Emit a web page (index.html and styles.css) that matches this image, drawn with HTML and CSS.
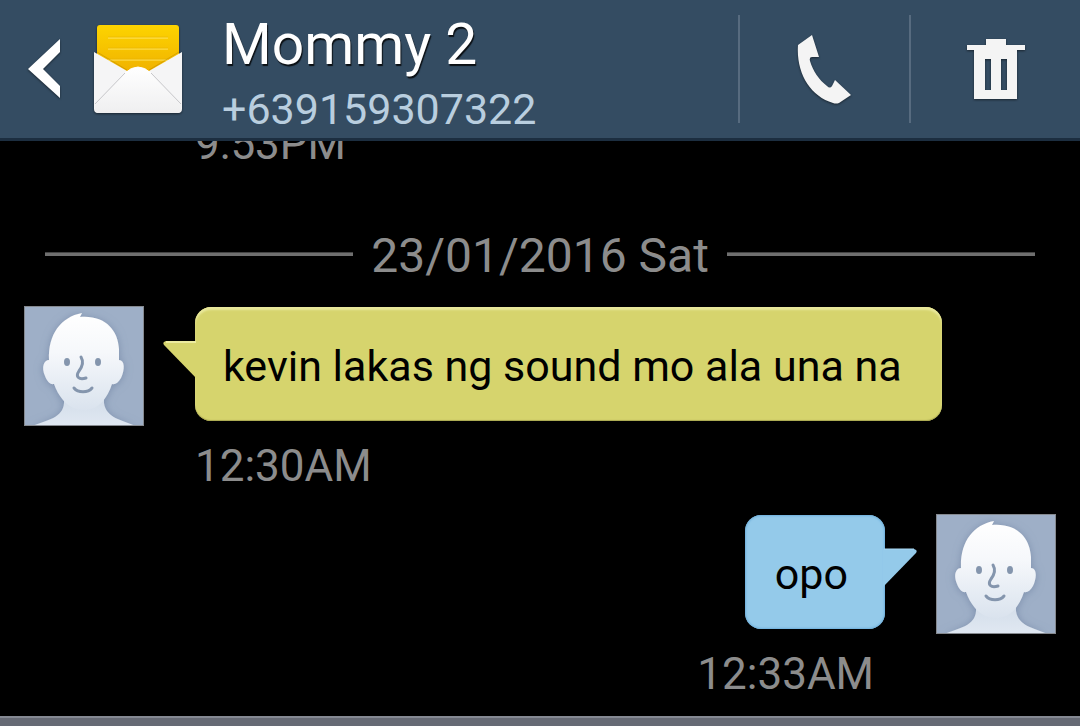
FILE: index.html
```html
<!DOCTYPE html>
<html lang="en">
<head>
    <meta charset="UTF-8">
    <meta name="viewport" content="width=device-width, initial-scale=1.0">
    <title>Mommy 2</title>
    <link rel="stylesheet" href="styles.css">
</head>
<body>
    <!-- shared drawings -->
    <svg class="defs" width="0" height="0" aria-hidden="true">
        <defs>
            <linearGradient id="paper" x1="0" y1="0" x2="0" y2="1">
                <stop offset="0" stop-color="#fdd400" />
                <stop offset="1" stop-color="#eda900" />
            </linearGradient>
            <linearGradient id="flap" x1="0" y1="0" x2="0" y2="1">
                <stop offset="0" stop-color="#ffffff" />
                <stop offset="1" stop-color="#efeff0" />
            </linearGradient>
            <linearGradient id="skin" x1="0" y1="0" x2="0" y2="1">
                <stop offset="0" stop-color="#ffffff" />
                <stop offset="0.4" stop-color="#f6f8fb" />
                <stop offset="1" stop-color="#dae3ee" />
            </linearGradient>
            <linearGradient id="neck" x1="0" y1="0" x2="0" y2="1">
                <stop offset="0" stop-color="#d3dde9" />
                <stop offset="1" stop-color="#e0e8f2" />
            </linearGradient>
            <filter id="glow" x="-20%" y="-20%" width="140%" height="140%">
                <feDropShadow dx="0" dy="1" stdDeviation="4" flood-color="#66799a" flood-opacity="0.6" />
            </filter>
            <symbol id="face" viewBox="0 0 120 120">
                <rect width="120" height="120" fill="#9eafc7" />
                <g filter="url(#glow)">
                    <path d="M8 120 C23 114 39 112 40 97 V90 H80 V97 C82 112 98 114 112 120 Z" fill="url(#neck)" />
                    <path d="M25 54 C24 28 37 11 58 7 L56 11 C81 9 94 24 95 43 V54 C101 54 101 64 97 72 C94 77 91 79 88 78 C86 85 82 91 79 95 C73 102 66 104 60 104 C52 104 45 101 39 94 C35 89 32 84 30 78 C26 79 23 75 21 70 C17 61 20 54 25 54 Z" fill="url(#skin)" />
                </g>
                <ellipse cx="43" cy="56" rx="3" ry="4" fill="#8495ad" />
                <ellipse cx="74" cy="56" rx="3" ry="4" fill="#8495ad" />
                <path d="M57 51 C60 56 58 61 55 65 C51 71 55 74 62 72" fill="none" stroke="#8495ad" stroke-width="3" stroke-linecap="round" />
                <path d="M50 82 C54 87 64 87 68 82" fill="none" stroke="#8495ad" stroke-width="3" stroke-linecap="round" />
                <rect x="0.5" y="0.5" width="119" height="119" fill="none" stroke="#85898f" />
            </symbol>
        </defs>
    </svg>

    <header class="top-bar">
        <button class="back" aria-label="Back">
            <svg width="36" height="64" viewBox="0 0 36 64">
                <path d="M33 2 V15 L16 32 L33 49 V61 L1 32 Z" fill="#ffffff" />
            </svg>
        </button>
        <svg class="mail" width="90" height="90" viewBox="0 0 90 90" aria-hidden="true">
            <path d="M4 4 Q4 1 7 1 H83 Q86 1 86 4 V60 H4 Z" fill="url(#paper)" />
            <path d="M15 14 H75 M15 25 H75 M15 36 H75" stroke="#ffe56a" />
            <path d="M15 13 H75 M15 24 H75 M15 35 H75" stroke="#e4b000" opacity="0.5" />
            <path d="M1 28 L34 47 H56 L89 28 V85 Q89 89 85 89 H5 Q1 89 1 85 Z" fill="#f5f5f6" />
            <path d="M4 28 L34 46 M86 28 L56 46" stroke="#a97b00" opacity="0.4" />
            <path d="M2 81 L32 49 Q45 37 58 49 L88 81 V85 Q88 89 84 89 H6 Q2 89 2 85 Z" fill="url(#flap)" />
            <path d="M2 80 L32 49 M58 49 L88 80" fill="none" stroke="#c7c7ca" />
            <path d="M32 49 Q45 37 58 49" fill="none" stroke="#ffffff" />
        </svg>
        <div class="contact">
            <h1 class="name">Mommy 2</h1>
            <p class="number">+639159307322</p>
        </div>
        <button class="action" aria-label="Call">
            <svg width="60" height="72" viewBox="0 0 60 72">
                <path d="M3 12 L17 2 L24 24 H17 Q14 24 15 28 C18 38 24 47 32 53 Q35 56 37 53 L40 47 L56 62 L44 70 Q41 71 38 70 C15 63 1 40 3 12 Z" fill="#f4f4f4" />
            </svg>
        </button>
        <button class="action" aria-label="Delete">
            <svg width="60" height="62" viewBox="0 0 60 62">
                <path fill-rule="evenodd" d="M20 1 H40 V7 H59 V12 H51 V61 H8 V12 H1 V7 H20 Z M19 21 V52 H25 V21 Z M35 21 V52 H41 V21 Z" fill="#f4f4f4" />
            </svg>
        </button>
    </header>

    <main class="thread">
        <time class="time">9:53PM</time>

        <div class="date">23/01/2016 Sat</div>

        <article class="message received">
            <div class="row">
                <svg class="avatar" role="img" aria-label="Mommy 2"><use href="#face" /></svg>
                <div class="bubble">
                    kevin lakas ng sound mo ala una na
                    <svg class="tail" width="35" height="40" viewBox="0 0 35 40">
                        <path d="M35 1 H4 Q0 2 2 5 L35 39 Z" fill="#d6d46d" />
                        <path d="M34 2 H4" stroke="#eceb9f" stroke-width="2" />
                    </svg>
                </div>
            </div>
            <time class="time">12:30AM</time>
        </article>

        <article class="message sent">
            <div class="row">
                <svg class="avatar" role="img" aria-label="Me"><use href="#face" /></svg>
                <div class="bubble">
                    opo
                    <svg class="tail" width="35" height="40" viewBox="0 0 35 40">
                        <path d="M0 1 H31 Q35 2 33 5 L0 39 Z" fill="#94caea" />
                        <path d="M1 1 H31" stroke="#a9d8f4" />
                    </svg>
                </div>
            </div>
            <time class="time">12:33AM</time>
        </article>
    </main>

    <footer class="bottom-bar"></footer>
</body>
</html>
```
FILE: styles.css
```css
* {
    box-sizing: border-box;
}

body {
    font-family: Roboto, "Liberation Sans", sans-serif;
    display: flex;
    flex-direction: column;
    height: 100vh;
    margin: 0;
    background-color: black;
    color: #8c8c8c;
}

.defs {
    position: absolute;
}

/* header */
.top-bar {
    display: flex;
    flex-shrink: 0;
    align-items: center;
    height: 141px;
    position: relative;
    z-index: 1;
    background-color: #344c62;
    border-bottom: 3px solid #1c2e40;
}

button {
    display: flex;
    align-items: center;
    justify-content: center;
    padding: 0;
    border: none;
    background: none;
    cursor: pointer;
}

.top-bar svg {
    filter: drop-shadow(0 1px 1px rgba(0, 0, 0, 0.5));
}

.back {
    width: 36px;
    margin: 0 30px 0 27px;
}

.contact {
    flex: 1;
    margin-left: 39px;
    padding-top: 10px;
}

.name {
    margin: 0;
    font-size: 57px;
    font-weight: 400;
    line-height: 70px;
    color: white;
    text-shadow: 1px 2px 1px rgba(0, 0, 0, 0.8);
}

.number {
    margin: 0;
    font-size: 43px;
    line-height: 58px;
    color: #b9cedf;
}

.action {
    width: 171px;
    height: 108px;
    border-left: 2px solid #576b7f;
}

/* messages */
.thread {
    flex: 1;
    min-height: 0;
    display: flex;
    flex-direction: column;
    justify-content: flex-end;
    gap: 22px;
    padding-bottom: 16px;
    overflow: hidden;
}

.time {
    display: block;
    margin: 0 195px;
    font-size: 44px;
    line-height: 52px;
}

.date {
    display: flex;
    align-items: center;
    gap: 18px;
    margin: 36px 45px 0;
    font-size: 48px;
    line-height: 56px;
}

.date::before,
.date::after {
    content: "";
    flex: 1;
    height: 3px;
    margin-bottom: 5px;
    background-color: #6f6f6f;
    border-top: 1px solid #444;
}

.message {
    display: flex;
    flex-direction: column;
    gap: 14px;
}

.row {
    display: flex;
    align-items: flex-start;
    gap: 51px;
    padding: 0 24px;
}

.sent .row {
    flex-direction: row-reverse;
}

.sent .time {
    margin-right: 206px;
    text-align: right;
}

.avatar {
    flex-shrink: 0;
    width: 120px;
    height: 120px;
}

.bubble {
    position: relative;
    margin-top: 1px;
    padding: 34px 40px 30px 28px;
    border-radius: 16px;
    font-size: 43px;
    line-height: 50px;
    color: black;
}

.received .bubble {
    background-color: #d6d46d;
    box-shadow: inset 0 3px 2px #e9e89c, inset 0 -1px 1px #a9a750;
}

.sent .bubble {
    padding: 34px 37px 30px 30px;
    background-color: #94caea;
    box-shadow: inset 0 0 2px 1px #6fb0dc;
}

.tail {
    position: absolute;
    top: 33px;
}

.received .tail {
    right: 100%;
    margin-right: -2px;
}

.sent .tail {
    left: 100%;
    margin-left: -2px;
}

.bottom-bar {
    flex-shrink: 0;
    height: 10px;
    background-color: #666a75;
    border-top: 2px solid #858993;
}
```
